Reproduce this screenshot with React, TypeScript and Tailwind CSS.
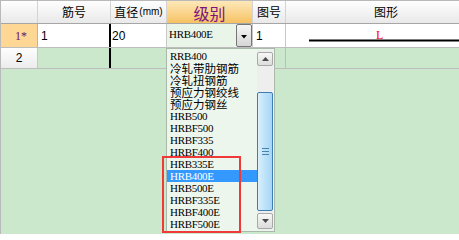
import React from "react";

const items: [string, boolean][] = [
  ["RRB400", false],
  ["冷轧带肋钢筋", true],
  ["冷轧扭钢筋", true],
  ["预应力钢绞线", true],
  ["预应力钢丝", true],
  ["HRB500", false],
  ["HRBF500", false],
  ["HRBF335", false],
  ["HRBF400", false],
  ["HRB335E", false],
  ["HRB400E", false],
  ["HRB500E", false],
  ["HRBF335E", false],
  ["HRBF400E", false],
  ["HRBF500E", false],
];

function Tri({ up }: { up?: boolean }) {
  return (
    <svg width="7" height="4" viewBox="0 0 7 4">
      {up ? <polygon points="0,4 7,4 3.5,0" fill="#4a4a4a" /> : <polygon points="0,0 7,0 3.5,4" fill="#4a4a4a" />}
    </svg>
  );
}

export default function App() {
  const hdr = "shrink-0 border-r border-[#d3d3d3] bg-linear-to-b from-[#fefefe] to-[#e9e9e9] flex items-center justify-center";
  return (
    <div className="relative w-[459px] h-[234px] overflow-hidden bg-[#cce8cc] border-t border-l border-[#b9b9b9] font-['Noto_Sans_CJK_SC',sans-serif] text-black">
      {/* header */}
      <div className="flex h-[23px] border-b border-[#a6a6a6]">
        <div className={`${hdr} w-[37px]`} />
        <div className={`${hdr} w-[73px] text-[12px] leading-none`}>筋号</div>
        <div className={`${hdr} w-[56px] text-[12px] leading-none`}>
          <span>直径</span>
          <span className="font-['Liberation_Sans',sans-serif] text-[10px] ml-[1px]">(mm)</span>
        </div>
        <div className="shrink-0 w-[86px] border-r border-[#d3d3d3] bg-linear-to-b from-[#fde8b8] to-[#f6c262] flex items-center justify-center text-[16px] leading-none text-[#7a1480] pt-[1px]">
          级别
        </div>
        <div className={`${hdr} w-[33px] text-[12px] leading-none`}>图号</div>
        <div className={`${hdr} w-[201px] text-[12px] leading-none`}>图形</div>
      </div>

      {/* row 1 */}
      <div className="flex h-[24px] border-b border-[#bdbdbd]">
        <div className="shrink-0 w-[37px] border-r border-[#c8b48a] bg-[#ffd795] flex items-center justify-center pl-[4px] font-['Liberation_Serif',serif] text-[12px] text-[#6c1060]">
          1*
        </div>
        <div className="shrink-0 w-[73px] border-r-2 border-black bg-white flex items-center pl-[3px] font-['Liberation_Sans',sans-serif] text-[12px]">
          1
        </div>
        <div className="shrink-0 w-[56px] border-r border-[#c8c8c8] bg-white flex items-center pl-[1px] font-['Liberation_Sans',sans-serif] text-[12px]">
          20
        </div>
        <div className="shrink-0 w-[86px] border-r border-[#c8c8c8] bg-[#e9f5e9] flex justify-between">
          <span className="pl-[2px] pt-[4px] leading-[12px] font-['Liberation_Serif',serif] text-[11px] tracking-[-0.3px]">HRB400E</span>
          <div className="w-[16px] h-[23px] border border-[#767676] rounded-[2px] bg-linear-to-b from-[#f6f6f6] to-[#d6d6d6] flex items-center justify-center pt-[3px]">
            <svg width="6" height="4" viewBox="0 0 6 4">
              <polygon points="0,0 6,0 3,3.5" fill="#000" />
            </svg>
          </div>
        </div>
        <div className="shrink-0 w-[33px] border-r border-[#c8c8c8] bg-white flex items-center pl-[3px] font-['Liberation_Sans',sans-serif] text-[12px]">
          1
        </div>
        <div className="shrink-0 w-[201px] bg-white">
          <svg width="201" height="23" viewBox="0 0 201 23">
            <text x="90" y="14.5" fill="#ff0000" fontSize="12" fontFamily="Liberation Serif, serif">
              L
            </text>
            <line x1="23" y1="16.5" x2="201" y2="16.5" stroke="#000" strokeWidth="2" />
          </svg>
        </div>
      </div>

      {/* row 2 */}
      <div className="flex h-[21px] border-b border-[#bdbdbd]">
        <div className="shrink-0 w-[37px] border-r border-[#c8c8c8] bg-linear-to-b from-[#fefefe] to-[#ececec] flex items-center justify-center font-['Liberation_Sans',sans-serif] text-[12px]">
          2
        </div>
        <div className="shrink-0 w-[73px] border-r-2 border-black" />
        <div className="shrink-0 w-[56px] border-r border-[#bdbdbd]" />
        <div className="shrink-0 w-[86px] border-r border-[#bdbdbd]" />
        <div className="shrink-0 w-[33px] border-r border-[#bdbdbd]" />
        <div className="shrink-0 w-[201px]" />
      </div>

      {/* dropdown list overlay */}
      <div className="absolute left-[165px] top-[47px] w-[109px] h-[184px] bg-[#edf6ed] border border-[#a9b9a9] flex">
        <div className="w-[90px] pt-[1px] flex flex-col">
          {items.map(([t, cjk], i) => (
            <div
              key={t}
              className={`h-[12px] pl-[3px] whitespace-nowrap ${
                cjk
                  ? "text-[11.5px] leading-[12px] font-['Noto_Sans_CJK_SC',sans-serif]"
                  : "text-[11px] leading-[12px] tracking-[-0.3px] font-['Liberation_Serif',serif]"
              } ${i === 10 ? "bg-[#3399ff] text-white" : "text-black"}`}
            >
              {t}
            </div>
          ))}
        </div>
        <div className="w-[16px] mt-[1px] h-[180px] bg-[#eeeeee] flex flex-col pt-[2px]">
          <div className="h-[14px] border border-[#a8a8a8] rounded-[2px] bg-linear-to-b from-[#f8f8f8] to-[#dcdcdc] flex items-center justify-center">
            <Tri up />
          </div>
          <div className="h-[26px]" />
          <div className="h-[119px] border border-[#3c7db2] rounded-[2px] bg-linear-to-r from-[#dcf0fc] via-[#bde2f9] to-[#a6d6f4] flex flex-col items-center justify-center gap-[2px]">
            <div className="w-[7px] h-[1px] bg-[#4a80ad]" />
            <div className="w-[7px] h-[1px] bg-[#4a80ad]" />
            <div className="w-[7px] h-[1px] bg-[#4a80ad]" />
          </div>
          <div className="h-[2px]" />
          <div className="h-[16px] border border-[#a8a8a8] rounded-[2px] bg-linear-to-b from-[#f8f8f8] to-[#dcdcdc] flex items-center justify-center">
            <Tri />
          </div>
        </div>
      </div>

      {/* red highlight rectangle */}
      <div className="absolute left-[161px] top-[155px] w-[79px] h-[77px] border-2 border-[#f03a3a]" />
    </div>
  );
}
